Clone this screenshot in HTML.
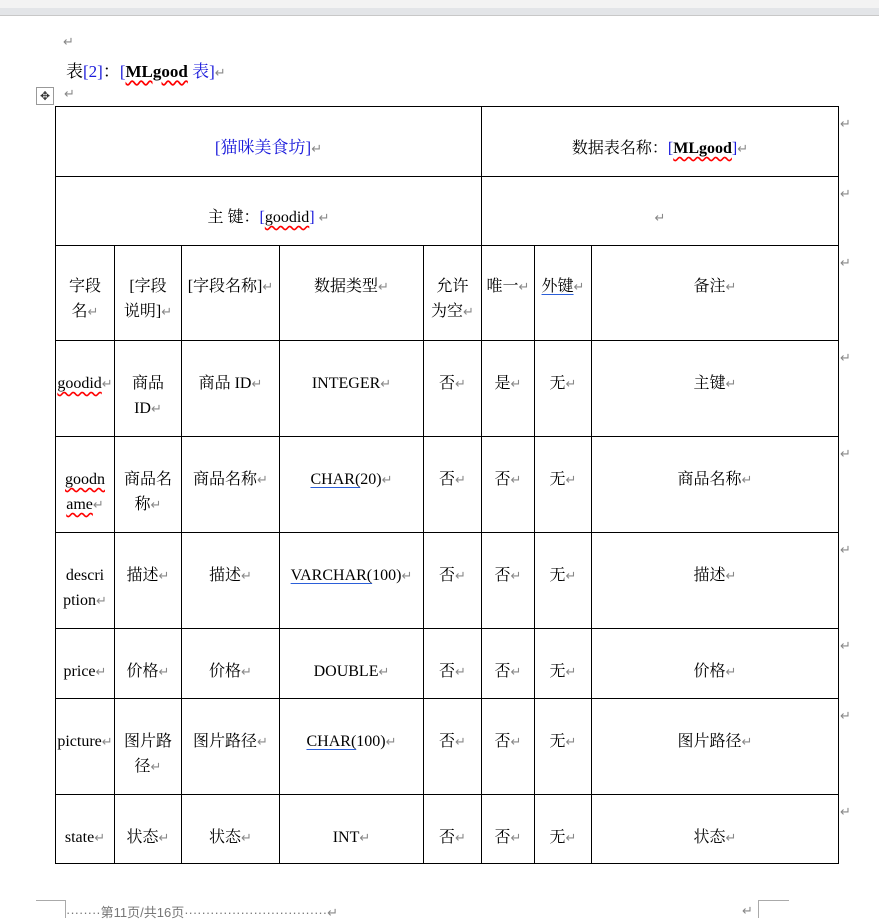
<!DOCTYPE html>
<html><head><meta charset="utf-8"><style>
body{margin:0;width:879px;height:917px;background:#fff;position:relative;overflow:hidden;font-family:"Liberation Serif","Noto Serif CJK SC",serif;font-size:16px;color:#000}
.ruler{position:absolute;left:0;top:0;width:879px;height:15px;background:#e3e5e8;border-bottom:1px solid #c8c8c8}
.ruler .w{position:absolute;left:0;right:0;top:0;height:8px;background:#f3f3f3;}
.r{color:#888;font-size:13px;font-family:"Liberation Sans",sans-serif}
.abs{position:absolute}
table{position:absolute;left:55px;top:106px;border-collapse:collapse;table-layout:fixed}
td{border:1px solid #000;padding:30px 0 0 0;vertical-align:top;text-align:center;line-height:25px;overflow:visible;white-space:nowrap}
.b{color:#1a1adb}
.u{text-decoration:underline wavy red;text-underline-offset:3px}
.ub{text-decoration:underline;text-decoration-color:#2b5fd9;text-underline-offset:3px}
</style></head><body>
<div class="ruler"><div class="w"></div></div>
<div class="abs r" style="left:63px;top:34px">↵</div>
<div class="abs" style="left:66px;top:57px;font-size:17px">表<span class="b">[2]</span>：<span class="b">[</span><b class="u">MLgood</b> <span class="b">表]</span><span class="r">↵</span></div>
<div class="abs" style="left:36px;top:87px;width:16px;height:16px;border:1px solid #999;font-size:12px;text-align:center;line-height:16px;color:#333">✥</div>
<div class="abs r" style="left:64px;top:86px">↵</div>
<table>
<colgroup><col style="width:59px"><col style="width:67px"><col style="width:98px"><col style="width:144px"><col style="width:58px"><col style="width:53px"><col style="width:57px"><col style="width:247px"></colgroup>
<tr style="height:70px"><td colspan="5" style="padding-top:28px;font-size:17px" class="b">[猫咪美食坊]<span class="r">↵</span></td><td colspan="3" style="padding-top:29px">数据表名称：<span class="b">[</span><b class="u">MLgood</b><span class="b">]</span><span class="r">↵</span></td></tr>
<tr style="height:69px"><td colspan="5" style="padding-top:28px">主 键：<span class="b">[</span><span class="u">goodid</span><span class="b">]</span> <span class="r">↵</span></td><td colspan="3" style="padding-top:28px"><span class="r">↵</span></td></tr>
<tr style="height:95px"><td style="padding-top:28px">字段<br>名<span class="r">↵</span></td><td style="padding-top:28px">[字段<br>说明]<span class="r">↵</span></td><td style="padding-top:28px">[字段名称]<span class="r">↵</span></td><td style="padding-top:28px">数据类型<span class="r">↵</span></td><td style="padding-top:28px">允许<br>为空<span class="r">↵</span></td><td style="padding-top:28px">唯一<span class="r">↵</span></td><td style="padding-top:28px"><span class="ub">外键</span><span class="r">↵</span></td><td style="padding-top:28px">备注<span class="r">↵</span></td></tr>
<tr style="height:96px"><td><span class="u">goodid</span><span class="r">↵</span></td><td>商品<br>ID<span class="r">↵</span></td><td>商品 ID<span class="r">↵</span></td><td>INTEGER<span class="r">↵</span></td><td>否<span class="r">↵</span></td><td>是<span class="r">↵</span></td><td>无<span class="r">↵</span></td><td>主键<span class="r">↵</span></td></tr>
<tr style="height:96px"><td><span class="u">goodn<br>ame</span><span class="r">↵</span></td><td>商品名<br>称<span class="r">↵</span></td><td>商品名称<span class="r">↵</span></td><td><span class="ub">CHAR(</span>20)<span class="r">↵</span></td><td>否<span class="r">↵</span></td><td>否<span class="r">↵</span></td><td>无<span class="r">↵</span></td><td>商品名称<span class="r">↵</span></td></tr>
<tr style="height:96px"><td>descri<br>ption<span class="r">↵</span></td><td>描述<span class="r">↵</span></td><td>描述<span class="r">↵</span></td><td><span class="ub">VARCHAR(</span>100)<span class="r">↵</span></td><td>否<span class="r">↵</span></td><td>否<span class="r">↵</span></td><td>无<span class="r">↵</span></td><td>描述<span class="r">↵</span></td></tr>
<tr style="height:70px"><td>price<span class="r">↵</span></td><td>价格<span class="r">↵</span></td><td>价格<span class="r">↵</span></td><td>DOUBLE<span class="r">↵</span></td><td>否<span class="r">↵</span></td><td>否<span class="r">↵</span></td><td>无<span class="r">↵</span></td><td>价格<span class="r">↵</span></td></tr>
<tr style="height:96px"><td>picture<span class="r">↵</span></td><td>图片路<br>径<span class="r">↵</span></td><td>图片路径<span class="r">↵</span></td><td><span class="ub">CHAR(</span>100)<span class="r">↵</span></td><td>否<span class="r">↵</span></td><td>否<span class="r">↵</span></td><td>无<span class="r">↵</span></td><td>图片路径<span class="r">↵</span></td></tr>
<tr style="height:69px"><td>state<span class="r">↵</span></td><td>状态<span class="r">↵</span></td><td>状态<span class="r">↵</span></td><td>INT<span class="r">↵</span></td><td>否<span class="r">↵</span></td><td>否<span class="r">↵</span></td><td>无<span class="r">↵</span></td><td>状态<span class="r">↵</span></td></tr>
</table>
<div class="abs r" style="left:840px;top:116px">↵</div><div class="abs r" style="left:840px;top:186px">↵</div><div class="abs r" style="left:840px;top:255px">↵</div><div class="abs r" style="left:840px;top:350px">↵</div><div class="abs r" style="left:840px;top:446px">↵</div><div class="abs r" style="left:840px;top:542px">↵</div><div class="abs r" style="left:840px;top:638px">↵</div><div class="abs r" style="left:840px;top:708px">↵</div><div class="abs r" style="left:840px;top:804px">↵</div>
<div class="abs" style="left:36px;top:900px;width:29px;height:17px;border-top:1px solid #aaa;border-right:1px solid #aaa"></div>
<div class="abs" style="left:758px;top:900px;width:30px;height:17px;border-top:1px solid #aaa;border-left:1px solid #aaa"></div>
<div class="abs" style="left:66px;top:902px;font-size:13px;color:#777;font-family:'Liberation Sans','Noto Sans CJK SC',sans-serif">········第11页/共16页·································<span class="r">↵</span></div>
<div class="abs r" style="left:742px;top:903px">↵</div>
</body></html>
